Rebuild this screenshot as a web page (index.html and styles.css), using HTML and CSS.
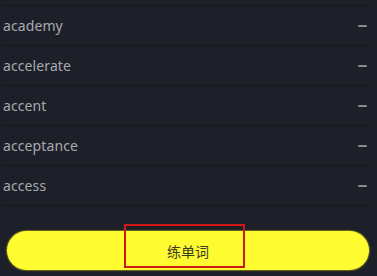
FILE: index.html
```html
<!DOCTYPE html>
<html lang="zh">
<head>
    <meta charset="UTF-8">
    <meta name="viewport" content="width=device-width, initial-scale=1.0">
    <title>单词本</title>
    <link rel="stylesheet" href="styles.css">
</head>
<body>
    <div class="page">
        <ul class="word-list">
            <li class="word-row"><span class="word">academy</span><span class="minus"></span></li>
            <li class="word-row"><span class="word">accelerate</span><span class="minus"></span></li>
            <li class="word-row"><span class="word">accent</span><span class="minus"></span></li>
            <li class="word-row"><span class="word">acceptance</span><span class="minus"></span></li>
            <li class="word-row"><span class="word">access</span><span class="minus"></span></li>
        </ul>

        <div class="footer">
            <button class="practice-btn">
                <span class="label">练单词</span>
                <span class="highlight"></span>
            </button>
        </div>
    </div>
</body>
</html>
```

FILE: styles.css
```css
* {
    margin: 0;
    padding: 0;
    box-sizing: border-box;
}

body {
    width: 377px;
    height: 276px;
    background: #1e2029;
    font-family: 'Noto Sans', 'Noto Sans CJK SC', sans-serif;
    overflow: hidden;
}

.page {
    display: flex;
    flex-direction: column;
    height: 100%;
}

.word-list {
    list-style: none;
    margin: 5px 5px 0 3px;
    border-top: 1px solid #16181e;
}

.word-row {
    display: flex;
    align-items: center;
    justify-content: space-between;
    height: 40px;
    padding-right: 5px;
    border-bottom: 1px solid #16181e;
}

.word {
    font-size: 14px;
    color: #a7a9ae;
    letter-spacing: 0.1px;
}

.minus {
    width: 9px;
    height: 2px;
    background: #8a8c92;
    border-radius: 1px;
}

.footer {
    padding: 25px 8px 0 7px;
}

.practice-btn {
    position: relative;
    display: flex;
    align-items: center;
    justify-content: center;
    width: 100%;
    height: 39px;
    border: none;
    border-radius: 20px;
    background: #fefb30;
    box-shadow: 0 0 1px 1px #6b6a1c;
    font-family: 'Noto Sans CJK SC', sans-serif;
    font-size: 14px;
    color: #3b3b2a;
}

.highlight {
    position: absolute;
    left: 117px;
    top: -7px;
    width: 121px;
    height: 44px;
    border: 2px solid #d01818;
}
```
